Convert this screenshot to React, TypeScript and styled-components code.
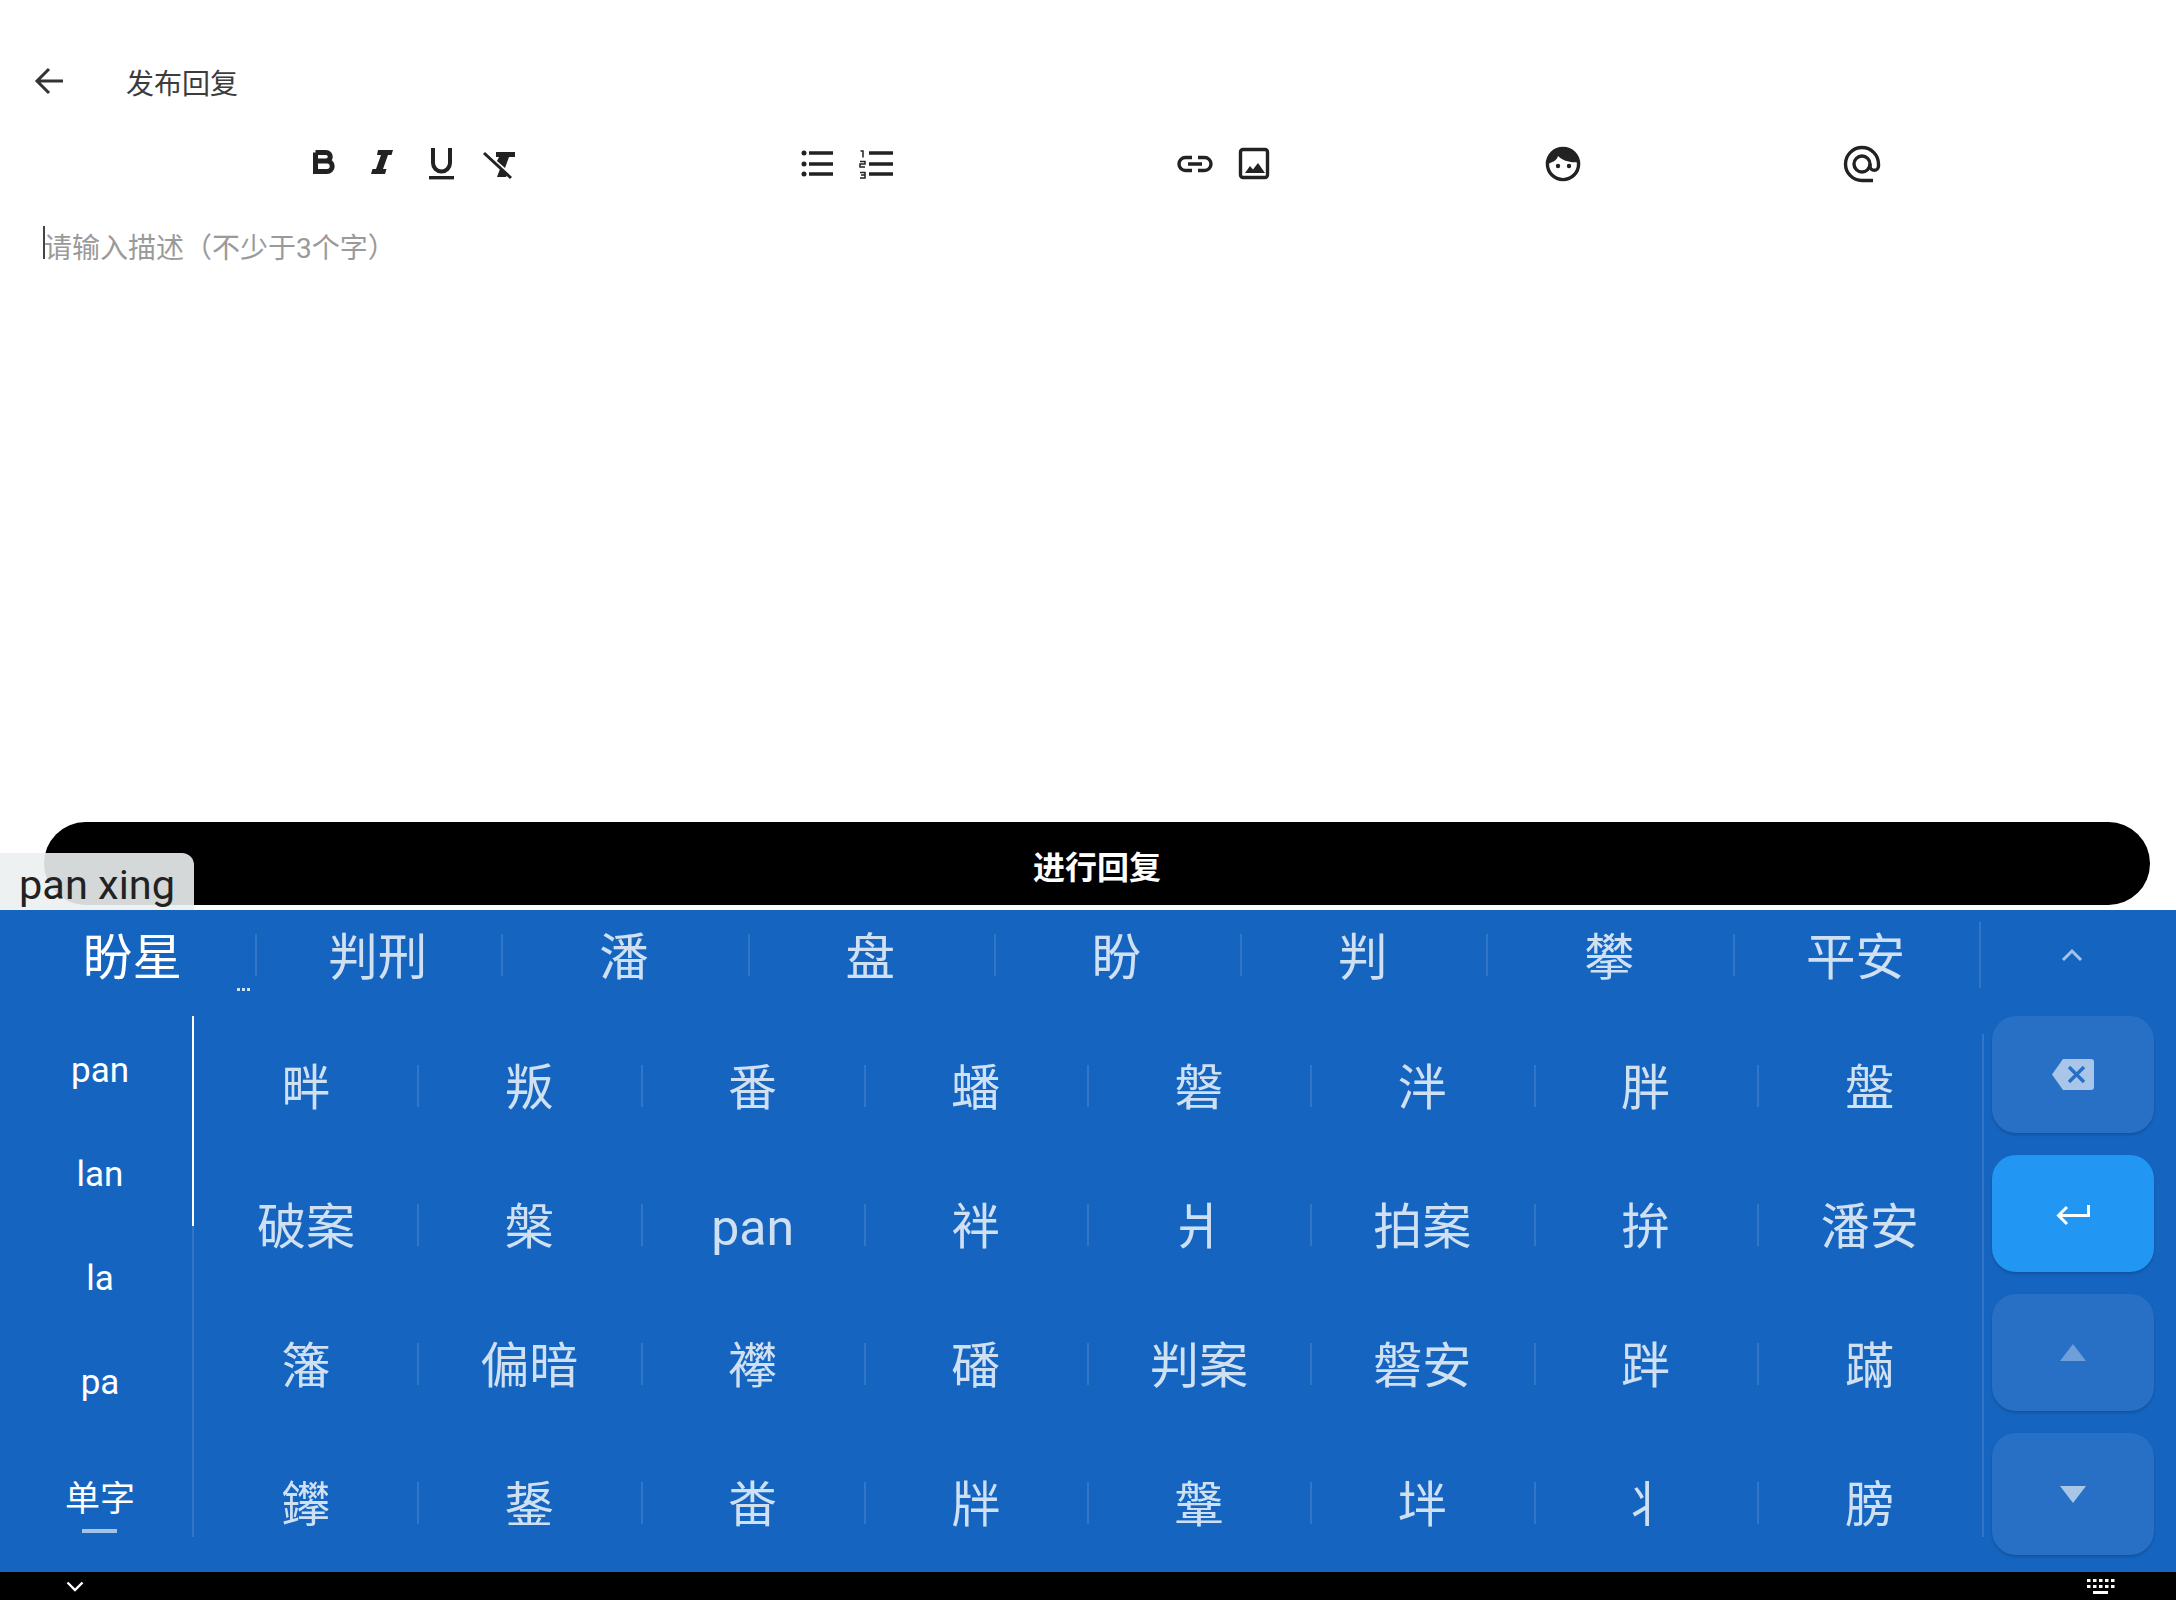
import React from 'react';
import styled, { createGlobalStyle } from 'styled-components';

const GlobalStyle = createGlobalStyle`
  html, body {
    margin: 0;
    padding: 0;
    background: #fff;
  }
  body {
    font-family: Roboto, "Noto Sans CJK SC", sans-serif;
  }
`;

const Page = styled.div`
  width: 2176px;
  height: 1600px;
  display: flex;
  flex-direction: column;
  overflow: hidden;
`;

const Main = styled.main`
  position: relative;
  flex: 1;
  display: flex;
  flex-direction: column;
  min-height: 0;
`;

const Header = styled.header`
  display: flex;
  align-items: center;
  height: 80px;
  margin-top: 41px;
  padding-left: 29px;
`;

const Title = styled.h1`
  margin: 2px 0 0 57px;
  font-size: 28px;
  font-weight: 400;
  color: #3c3c3c;
  font-family: "Noto Sans CJK SC", sans-serif;
`;

const Toolbar = styled.div`
  display: flex;
  align-items: center;
  height: 86px;
  padding-left: 303px;
`;

const ToolGroup = styled.div<{ $offset?: number; $gap?: number }>`
  display: flex;
  gap: ${p => p.$gap ?? 19}px;
  margin-left: ${p => p.$offset ?? 0}px;
`;

const Icon = styled.svg`
  display: block;
  width: 40px;
  height: 40px;
  color: #222;
  fill: none;
`;

const Editor = styled.div`
  position: relative;
  flex: 1;
  padding: 22px 0 0 44px;
`;

const Placeholder = styled.div`
  font-family: Roboto, "Noto Sans CJK SC", sans-serif;
  font-size: 28px;
  line-height: 40px;
  color: #9a9a9a;
`;

const Caret = styled.span`
  position: absolute;
  left: 43px;
  top: 19px;
  width: 2px;
  height: 33px;
  background: #444;
`;

const SubmitButton = styled.button`
  height: 83px;
  margin: 0 26px 5px 44px;
  border: none;
  border-radius: 42px;
  background: #000;
  color: #fff;
  font-family: "Noto Sans CJK SC", sans-serif;
  font-size: 32px;
  font-weight: 700;
  padding: 3px 0 0;
`;

const Composing = styled.div`
  position: absolute;
  left: 0;
  bottom: 0;
  width: 175px;
  height: 57px;
  padding-left: 19px;
  border-top-right-radius: 12px;
  background: rgba(236, 239, 240, 0.9);
  color: #222;
  font-family: Roboto, sans-serif;
  font-size: 41.5px;
  line-height: 63px;
`;

const Keyboard = styled.section`
  height: 662px;
  background: #1565c0;
  display: flex;
  flex-direction: column;
`;

const CandidateRow = styled.div`
  position: relative;
  display: grid;
  grid-template-columns: 257px repeat(7, 246.3px) 1fr;
  height: 106px;
  align-items: start;
`;

const CandidateCell = styled.div`
  display: flex;
  align-items: center;
  height: 90px;
`;

const CandidateText = styled.span<{ $active?: boolean }>`
  flex: 1;
  text-align: center;
  font-size: 49.5px;
  line-height: 60px;
  margin-top: -3px;
  font-family: "Noto Sans CJK SC", sans-serif;
  color: ${p => (p.$active ? '#fff' : 'rgba(255, 255, 255, 0.8)')};
  padding: ${p => (p.$active ? '0 0 0 10px' : '0 3px 0 0')};
`;

const Divider = styled.span<{ $height?: number }>`
  flex: none;
  width: 2px;
  height: ${p => p.$height ?? 42}px;
  background: rgba(255, 255, 255, 0.12);
`;

const ExpandCell = styled.div`
  display: flex;
  align-items: center;
  justify-content: center;
  height: 90px;
  margin-right: 13px;
`;

const MoreDots = styled.svg`
  position: absolute;
  left: 237px;
  top: 78px;
  width: 13px;
  height: 4px;
  color: rgba(255, 255, 255, 0.8);
`;

const KeyboardBody = styled.div`
  flex: 1;
  display: flex;
  align-items: flex-start;
`;

const PinyinList = styled.div`
  width: 184px;
  padding: 2px 0 0 8px;
  display: flex;
  flex-direction: column;
  align-items: center;
`;

const PinyinItem = styled.div`
  height: 104px;
  display: flex;
  align-items: center;
  font-size: 35px;
  color: #fff;
  font-family: Roboto, "Noto Sans CJK SC", sans-serif;
`;

const ModeItem = styled.div`
  margin-top: 42px;
  display: flex;
  flex-direction: column;
  align-items: center;
  font-size: 35px;
  line-height: 40px;
  color: #fff;
  font-family: "Noto Sans CJK SC", sans-serif;
`;

const ModeMark = styled.span`
  width: 35px;
  height: 4px;
  margin-top: 13px;
  background: #a4c3e6;
`;

const ScrollTrack = styled.div`
  width: 2px;
  height: 521px;
  background: rgba(255, 255, 255, 0.12);
`;

const ScrollThumb = styled.div`
  height: 210px;
  background: #fff;
`;

const WordGrid = styled.div`
  width: 1786px;
  margin-left: 2px;
  display: grid;
  grid-template-columns: repeat(8, 1fr);
  grid-auto-rows: 139px;
  flex: none;
`;

const WordCell = styled.div`
  display: flex;
  align-items: center;
`;

const WordText = styled.span<{ $latin?: boolean }>`
  flex: 1;
  text-align: center;
  font-size: ${p => (p.$latin ? 50 : 49)}px;
  line-height: 60px;
  margin-top: 6px;
  padding-right: 1px;
  color: rgba(255, 255, 255, 0.8);
  font-family: Roboto, "Noto Sans CJK SC", sans-serif;
`;

const KeyDivider = styled.div`
  width: 2px;
  height: 503px;
  margin-top: 18px;
  background: rgba(255, 255, 255, 0.12);
`;

const KeyColumn = styled.div`
  width: 162px;
  margin-left: 8px;
  display: flex;
  flex-direction: column;
  gap: 22px;
`;

const Key = styled.div<{ $primary?: boolean; $height?: number }>`
  box-sizing: border-box;
  height: ${p => p.$height ?? 117}px;
  padding-top: ${p => (p.$primary ? 3 : 0)}px;
  border-radius: 24px;
  display: flex;
  align-items: center;
  justify-content: center;
  background: ${p => (p.$primary ? '#2196f3' : '#2770c6')};
  box-shadow: 0 2px 3px rgba(0, 0, 0, 0.18);
`;

const NavBar = styled.nav`
  height: 28px;
  background: #000;
  display: flex;
  align-items: center;
  justify-content: space-between;
  padding: 0 61px 0 66px;
`;

const candidates = ['判刑', '潘', '盘', '盼', '判', '攀', '平安'];

const pinyin = ['pan', 'lan', 'la', 'pa'];

const words = [
  '畔', '叛', '番', '蟠', '磐', '泮', '胖', '盤',
  '破案', '槃', 'pan', '袢', '爿', '拍案', '拚', '潘安',
  '籓', '偏暗', '襻', '磻', '判案', '磐安', '跘', '蹣',
  '鑻', '鋬', '畨', '牉', '鞶', '坢', '丬', '膀',
];

const ink = { stroke: 'currentColor', strokeWidth: 3.4 };

function App(): JSX.Element {
  return (
    <Page>
      <GlobalStyle />
      <Main>
        <Header>
          <Icon viewBox="0 0 40 40" style={{ color: '#333' }}>
            <path d="M34 20H8M20 8L8 20L20 32" {...ink} strokeWidth={3} />
          </Icon>
          <Title>发布回复</Title>
        </Header>

        <Toolbar>
          <ToolGroup>
            <Icon viewBox="0 0 40 40">
              <path d="M12.5 8.5V27.5H24a5.2 5.2 0 0 0 0-10.4H12.5M12.5 8.5H23a4.3 4.3 0 0 1 0 8.6" {...ink} strokeWidth={5} />
            </Icon>
            <Icon viewBox="0 0 40 40">
              <path d="M16 6H31L29.5 11H26L21 25H24.5L23 30H9L10.5 25H14L19 11H15z" fill="currentColor" />
            </Icon>
            <Icon viewBox="0 0 40 40">
              <path d="M12 4V19a8.5 8.5 0 0 0 17 0V4" {...ink} strokeWidth={4} />
              <rect x="8" y="32" width="25" height="3.4" fill="currentColor" />
            </Icon>
            <Icon viewBox="0 0 40 40">
              <path d="M16 8H35V13H29L25 24L17 17L19 13H16zM20 25L27 31L26 33H17z" fill="currentColor" />
              <path d="M4 9L31 34" {...ink} strokeWidth={3} />
            </Icon>
          </ToolGroup>

          <ToolGroup $offset={277} $gap={20}>
            <Icon viewBox="0 0 40 40">
              <circle cx="7" cy="9" r="2.5" fill="currentColor" />
              <circle cx="7" cy="20" r="2.5" fill="currentColor" />
              <circle cx="7" cy="30" r="2.5" fill="currentColor" />
              <path d="M12 9H36M12 20H36M12 30H36" {...ink} />
            </Icon>
            <Icon viewBox="0 0 40 40">
              <path d="M3.5 7H6V13.5M3 17.5H8V20H3V23H8M3 28.5H8V34H3M4 31H8" stroke="currentColor" strokeWidth={1.5} />
              <path d="M12 9H36M12 20H36M12 30H36" {...ink} />
            </Icon>
          </ToolGroup>

          <ToolGroup $offset={278}>
            <Icon viewBox="0 0 40 40">
              <path d="M17 13.5H10.5a6.5 6.5 0 0 0 0 13H17M23 13.5H29.5a6.5 6.5 0 0 1 0 13H23M13 20H27" {...ink} />
            </Icon>
            <Icon viewBox="0 0 40 40">
              <rect x="6.5" y="5.5" width="27" height="28" rx="2.5" {...ink} />
              <path d="M11 29L16 22L19 25.5L24 19L31 29z" fill="currentColor" />
            </Icon>
          </ToolGroup>

          <ToolGroup $offset={269}>
            <Icon viewBox="0 0 40 40">
              <circle cx="20" cy="20" r="15.6" fill="#fff" {...ink} />
              <path d="M7 19C10 18 14 16 15 12C20 17 28 19 35 18C34 10 28 4 20 4C12 4 6 10 5 20z" fill="currentColor" />
              <circle cx="15" cy="22" r="2.2" fill="currentColor" />
              <circle cx="26" cy="22" r="2.2" fill="currentColor" />
            </Icon>
          </ToolGroup>

          <ToolGroup $offset={259}>
            <Icon viewBox="0 0 40 40">
              <circle cx="20" cy="20" r="8" {...ink} />
              <path d="M31 36.5H20A16.5 16.5 0 1 1 36.5 20V22A4.2 4.2 0 0 1 28 22V20" {...ink} />
            </Icon>
          </ToolGroup>
        </Toolbar>

        <Editor>
          <Caret />
          <Placeholder>请输入描述（不少于3个字）</Placeholder>
        </Editor>

        <SubmitButton>进行回复</SubmitButton>
        <Composing>pan xing</Composing>
      </Main>

      <Keyboard>
        <CandidateRow>
          <CandidateCell>
            <CandidateText $active>盼星</CandidateText>
            <Divider />
          </CandidateCell>
          {candidates.map((word, i) => (
            <CandidateCell key={word}>
              <CandidateText>{word}</CandidateText>
              <Divider $height={i === candidates.length - 1 ? 66 : 42} />
            </CandidateCell>
          ))}
          <ExpandCell>
            <svg width="22" height="14" viewBox="0 0 22 14" fill="none">
              <path d="M2 12L11 3L20 12" stroke="#a4c3e6" strokeWidth="3" />
            </svg>
          </ExpandCell>
          <MoreDots viewBox="0 0 13 4">
            <rect x="0" y="0" width="3" height="3" fill="currentColor" />
            <rect x="5" y="0" width="3" height="3" fill="currentColor" />
            <rect x="10" y="0" width="3" height="3" fill="currentColor" />
          </MoreDots>
        </CandidateRow>

        <KeyboardBody>
          <PinyinList>
            {pinyin.map(item => (
              <PinyinItem key={item}>{item}</PinyinItem>
            ))}
            <ModeItem>
              单字
              <ModeMark />
            </ModeItem>
          </PinyinList>
          <ScrollTrack>
            <ScrollThumb />
          </ScrollTrack>

          <WordGrid>
            {words.map((word, i) => (
              <WordCell key={word}>
                <WordText $latin={word === 'pan'}>{word}</WordText>
                {i % 8 !== 7 && <Divider />}
              </WordCell>
            ))}
          </WordGrid>

          <KeyDivider />

          <KeyColumn>
            <Key>
              <svg width="42" height="31" viewBox="0 0 42 31">
                <path d="M11 0H39a3 3 0 0 1 3 3V28a3 3 0 0 1-3 3H11L0 15.5z" fill="#a9c6e8" />
                <path d="M17 8L32 23M32 8L17 23" stroke="#2770c6" strokeWidth="3.4" />
              </svg>
            </Key>
            <Key $primary>
              <svg width="34" height="22" viewBox="0 0 34 22" fill="none">
                <path d="M32.5 1V11.5H3M11 3L2.5 11.5L11 20" stroke="#fff" strokeWidth="3" />
              </svg>
            </Key>
            <Key>
              <svg width="26" height="17" viewBox="0 0 26 17">
                <path d="M13 0L26 17H0z" fill="#6f9fd9" />
              </svg>
            </Key>
            <Key $height={122}>
              <svg width="26" height="17" viewBox="0 0 26 17">
                <path d="M0 0H26L13 17z" fill="#a9c6e8" />
              </svg>
            </Key>
          </KeyColumn>
        </KeyboardBody>
      </Keyboard>

      <NavBar>
        <svg width="18" height="11" viewBox="0 0 18 11" fill="none">
          <path d="M1.5 1.5L9 9L16.5 1.5" stroke="#fff" strokeWidth="2.4" />
        </svg>
        <svg width="28" height="15" viewBox="0 0 28 15" fill="#fff">
          {[0, 6, 12, 18, 24].map(x => (
            <React.Fragment key={x}>
              <rect x={x} y="0" width="3.5" height="3" />
              <rect x={x} y="6" width="3.5" height="3" />
            </React.Fragment>
          ))}
          <rect x="6" y="12" width="15" height="3" />
        </svg>
      </NavBar>
    </Page>
  );
}

export default App;
